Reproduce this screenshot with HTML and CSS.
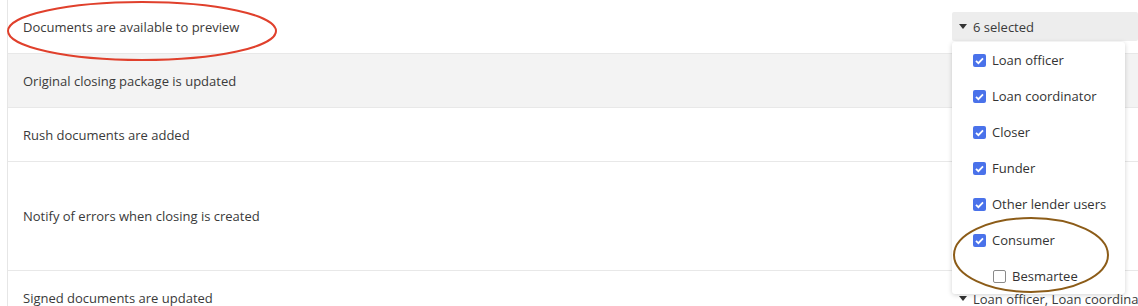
FILE: index.html
```html
<!DOCTYPE html>
<html>
<head>
<title>Notification settings</title>
<link rel="stylesheet" href="styles.css">
</head>
<body>
<div class="list">
  <div class="row">
    <div class="label">Documents are available to preview</div>
    <div class="control">
      <div class="picker open">
        <svg class="caret" width="8" height="5" viewBox="0 0 8 5"><path d="M0 0h8L4 5z"/></svg>
        <span>6 selected</span>
      </div>
      <div class="menu">
        <label class="opt"><span class="box checked"></span>Loan officer</label>
        <label class="opt"><span class="box checked"></span>Loan coordinator</label>
        <label class="opt"><span class="box checked"></span>Closer</label>
        <label class="opt"><span class="box checked"></span>Funder</label>
        <label class="opt"><span class="box checked"></span>Other lender users</label>
        <label class="opt"><span class="box checked"></span>Consumer</label>
        <label class="opt sub"><span class="box"></span>Besmartee</label>
      </div>
    </div>
  </div>
  <div class="row shaded">
    <div class="label">Original closing package is updated</div>
    <div class="control"></div>
  </div>
  <div class="row">
    <div class="label">Rush documents are added</div>
    <div class="control"></div>
  </div>
  <div class="row tall">
    <div class="label">Notify of errors when closing is created</div>
    <div class="control"></div>
  </div>
  <div class="row last">
    <div class="label">Signed documents are updated</div>
    <div class="control">
      <div class="picker">
        <svg class="caret" width="8" height="5" viewBox="0 0 8 5"><path d="M0 0h8L4 5z"/></svg>
        <span class="value">Loan officer, Loan coordinat</span>
      </div>
    </div>
  </div>
</div>

<svg class="marks" width="1138" height="306">
  <ellipse cx="142" cy="31" rx="134" ry="29" fill="none" stroke="#e0402c" stroke-width="2"/>
  <ellipse cx="1031" cy="255" rx="77" ry="37" fill="none" stroke="#8c5c18" stroke-width="2"/>
</svg>
</body>
</html>
```

FILE: styles.css
```css
/* notification settings list */

html, body
{ margin: 0;
overflow: hidden;
background: #fff;
}

body
{ font-family: "Open Sans", "Liberation Sans", sans-serif;
font-size: 13px;
color: #3a3a3a;
position: relative;
width: 1138px;
height: 306px;
}

div.list
{ margin-left: 7px;
border-left: 1px solid #e6e6e6;
}

div.row
{ display: flex;
align-items: center;
height: 53px;
border-bottom: 1px solid #e8e8e8;
}

div.row.shaded
{ background-color: #f3f3f3;
}

div.row.tall
{ height: 108px;
}

div.row.last
{ align-items: flex-start;
padding-top: 13px;
border-bottom: none;
}

div.label
{ flex: none;
width: 929px;
padding-left: 15px;
}

div.row.last div.label
{ line-height: 29px;
}

div.control
{ position: relative;
flex: 1;
min-width: 0;
}

div.picker
{ display: flex;
align-items: center;
gap: 6px;
height: 29px;
padding-left: 7px;
white-space: nowrap;
overflow: hidden;
}

div.picker.open
{ background-color: #ededed;
border-radius: 2px;
}

svg.caret
{ fill: #333;
flex: none;
}

div.menu
{ position: absolute;
top: 30px;
left: 0;
width: 173px;
background: #fff;
border-radius: 3px;
box-shadow: 0 1px 5px rgba(0,0,0,0.18);
z-index: 10;
color: #333;
}

label.opt
{ display: flex;
align-items: center;
gap: 6px;
height: 36px;
padding-left: 21px;
}

label.opt.sub
{ padding-left: 41px;
}

span.box
{ width: 13px;
height: 13px;
border-radius: 2px;
box-sizing: border-box;
border: 1px solid #8a8a8a;
background: #fff;
flex: none;
}

span.box.checked
{ border: none;
background-color: #4a72ea;
background-image: url("data:image/svg+xml,%3Csvg xmlns='http://www.w3.org/2000/svg' viewBox='0 0 13 13'%3E%3Cpath d='M3 6.8l2.4 2.4L10 4.3' fill='none' stroke='white' stroke-width='1.8'/%3E%3C/svg%3E");
}

svg.marks
{ position: absolute;
top: 0;
left: 0;
pointer-events: none;
z-index: 20;
}
```
